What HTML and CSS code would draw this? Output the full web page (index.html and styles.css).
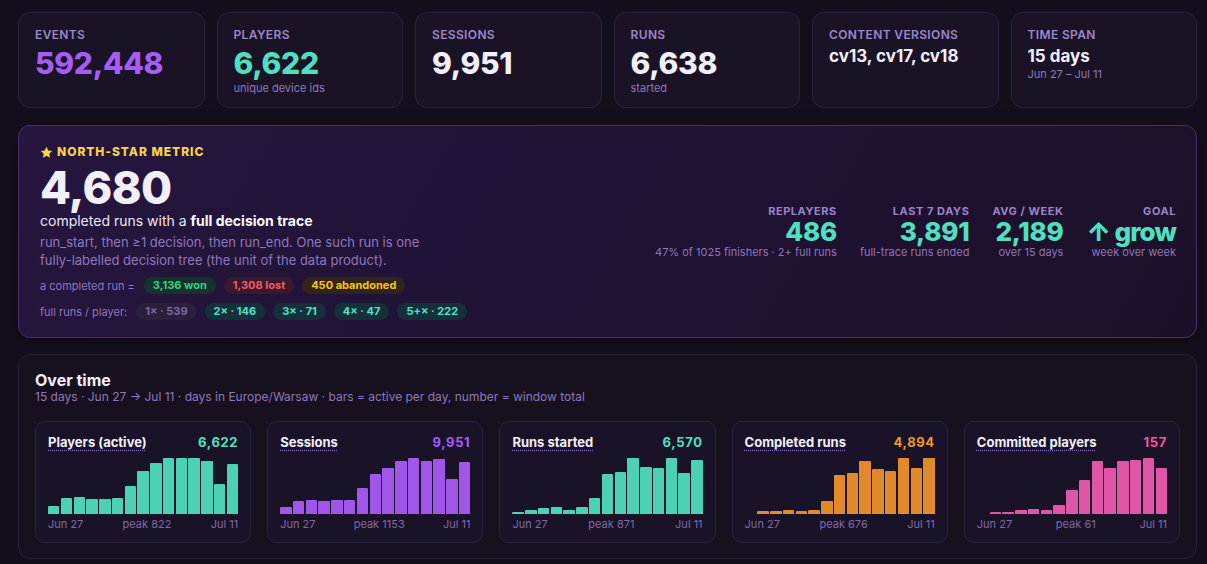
FILE: index.html
```html
<!DOCTYPE html>
<html lang="en">
<head>
    <meta charset="UTF-8">
    <meta name="viewport" content="width=device-width, initial-scale=1.0">
    <title>Telemetry Overview</title>
    <link rel="stylesheet" href="styles.css">
</head>
<body>
<div class="page">

    <!-- Headline counters -->
    <section class="stats">
        <div class="stat">
            <div class="stat-label">Events</div>
            <div class="stat-value purple">592,448</div>
        </div>
        <div class="stat">
            <div class="stat-label">Players</div>
            <div class="stat-value teal">6,622</div>
            <div class="stat-sub">unique device ids</div>
        </div>
        <div class="stat">
            <div class="stat-label">Sessions</div>
            <div class="stat-value">9,951</div>
        </div>
        <div class="stat">
            <div class="stat-label">Runs</div>
            <div class="stat-value">6,638</div>
            <div class="stat-sub">started</div>
        </div>
        <div class="stat">
            <div class="stat-label">Content versions</div>
            <div class="stat-text">cv13, cv17, cv18</div>
        </div>
        <div class="stat">
            <div class="stat-label">Time span</div>
            <div class="stat-text">15 days</div>
            <div class="stat-sub tight">Jun 27 – Jul 11</div>
        </div>
    </section>

    <!-- North-star metric -->
    <section class="northstar">
        <div class="ns-main">
            <div class="ns-label">
                <svg class="ns-star" viewBox="0 0 24 24" width="13" height="13"><path d="M12 1.5l3.2 6.7 7.3.9-5.4 5.1 1.4 7.3L12 17.9l-6.5 3.6 1.4-7.3-5.4-5.1 7.3-.9z" fill="#f7d843"/></svg>
                North-star metric
            </div>
            <div class="ns-value">4,680</div>
            <div class="ns-caption">completed runs with a <strong>full decision trace</strong></div>
            <p class="ns-desc">run_start, then ≥1 decision, then run_end. One such run is one fully-labelled decision tree (the unit of the data product).</p>
            <div class="chip-row">
                <span class="chip-label">a completed run =</span>
                <span class="chip won">3,136 won</span>
                <span class="chip lost">1,308 lost</span>
                <span class="chip abandoned">450 abandoned</span>
            </div>
            <div class="chip-row">
                <span class="chip-label">full runs / player:</span>
                <span class="chip muted">1× · 539</span>
                <span class="chip cyan">2× · 146</span>
                <span class="chip cyan">3× · 71</span>
                <span class="chip cyan">4× · 47</span>
                <span class="chip cyan">5+× · 222</span>
            </div>
        </div>
        <div class="ns-side">
            <div class="kpi">
                <div class="kpi-label">Replayers</div>
                <div class="kpi-value">486</div>
                <div class="kpi-sub">47% of 1025 finishers · 2+ full runs</div>
            </div>
            <div class="kpi">
                <div class="kpi-label">Last 7 days</div>
                <div class="kpi-value">3,891</div>
                <div class="kpi-sub">full-trace runs ended</div>
            </div>
            <div class="kpi">
                <div class="kpi-label">Avg / week</div>
                <div class="kpi-value">2,189</div>
                <div class="kpi-sub">over 15 days</div>
            </div>
            <div class="kpi">
                <div class="kpi-label">Goal</div>
                <div class="kpi-value goal">↑ grow</div>
                <div class="kpi-sub">week over week</div>
            </div>
        </div>
    </section>

    <!-- Daily charts -->
    <section class="panel">
        <h2>Over time</h2>
        <p class="panel-sub">15 days · Jun 27 → Jul 11 · days in Europe/Warsaw · bars = active per day, number = window total</p>
        <div class="charts">
            <div class="chart">
                <div class="chart-head">
                    <span class="chart-title">Players (active)</span>
                    <span class="chart-total teal">6,622</span>
                </div>
                <div class="bars teal-bars" data-values="117,235,250,220,220,235,411,631,749,822,822,822,778,440,734"></div>
                <div class="chart-axis"><span>Jun 27</span><span>peak 822</span><span>Jul 11</span></div>
            </div>
            <div class="chart">
                <div class="chart-head">
                    <span class="chart-title">Sessions</span>
                    <span class="chart-total purple">9,951</span>
                </div>
                <div class="bars purple-bars" data-values="138,265,288,265,288,288,530,819,945,1095,1153,1095,1130,715,1072"></div>
                <div class="chart-axis"><span>Jun 27</span><span>peak 1153</span><span>Jul 11</span></div>
            </div>
            <div class="chart">
                <div class="chart-head">
                    <span class="chart-title">Runs started</span>
                    <span class="chart-total teal">6,570</span>
                </div>
                <div class="bars teal-bars" data-values="35,61,87,105,61,105,244,618,653,871,732,714,871,636,836"></div>
                <div class="chart-axis"><span>Jun 27</span><span>peak 871</span><span>Jul 11</span></div>
            </div>
            <div class="chart">
                <div class="chart-head">
                    <span class="chart-title">Completed runs</span>
                    <span class="chart-total orange">4,894</span>
                </div>
                <div class="bars orange-bars" data-values="0,34,34,47,34,54,155,466,493,642,541,521,676,554,676"></div>
                <div class="chart-axis"><span>Jun 27</span><span>peak 676</span><span>Jul 11</span></div>
            </div>
            <div class="chart">
                <div class="chart-head">
                    <span class="chart-title">Committed players</span>
                    <span class="chart-total pink">157</span>
                </div>
                <div class="bars pink-bars" data-values="0,2,2,4,6,4,10,26,37,58,50,58,59,61,50"></div>
                <div class="chart-axis"><span>Jun 27</span><span>peak 61</span><span>Jul 11</span></div>
            </div>
        </div>
    </section>
</div>

<script>
    // Build the daily bars, scaled to each chart's peak day
    document.querySelectorAll('.bars').forEach((chart) => {
        const values = chart.dataset.values.split(',').map(Number);
        const peak = Math.max(...values);
        values.forEach((v) => {
            const bar = document.createElement('div');
            bar.className = 'bar';
            bar.style.height = (v / peak * 100) + '%';
            chart.appendChild(bar);
        });
    });
</script>
</body>
</html>
```

FILE: styles.css
```css
body {
    margin: 0;
    background: #140f1c;
    color: #f1edf9;
    font-family: Inter, "Liberation Sans", sans-serif;
}
.page {
    padding: 12px 10px 0 18px;
}

/* headline counters */
.stats {
    display: grid;
    grid-template-columns: repeat(6, 1fr);
    gap: 12px;
}
.stat {
    height: 96px;
    box-sizing: border-box;
    padding: 15px 16px 0;
    background: #1a1326;
    border: 1px solid #2b2141;
    border-radius: 12px;
}
.stat-label {
    font-size: 12px;
    line-height: 14px;
    font-weight: 600;
    letter-spacing: 0.03em;
    text-transform: uppercase;
    color: #9d86cd;
}
.stat-value {
    margin-top: 6px;
    font-size: 30px;
    line-height: 30px;
    font-weight: 800;
    letter-spacing: -0.01em;
    color: #f2eefa;
}
.stat-text {
    margin-top: 4px;
    font-size: 17px;
    line-height: 20px;
    font-weight: 700;
    color: #f2eefa;
}
.stat-sub {
    margin-top: 3px;
    font-size: 11px;
    line-height: 14px;
    color: #8d78b9;
}
.stat-sub.tight {
    margin-top: 1px;
}
.purple { color: #a45ef5; }
.teal { color: #4fe0c0; }
.orange { color: #f0982e; }
.pink { color: #f2559f; }

/* north-star metric */
.northstar {
    margin-top: 17px;
    height: 213px;
    box-sizing: border-box;
    display: flex;
    justify-content: space-between;
    align-items: center;
    padding: 0 20px 0 21px;
    background: linear-gradient(120deg, #26163f 0%, #1f1233 55%, #1c1029 100%);
    border: 1px solid #4a2f6a;
    border-radius: 12px;
    box-shadow: 0 4px 18px rgba(0, 0, 0, 0.35);
}
.ns-main {
    align-self: flex-start;
    padding-top: 18px;
}
.ns-label {
    display: flex;
    align-items: center;
    gap: 4px;
    font-size: 12px;
    line-height: 16px;
    font-weight: 800;
    letter-spacing: 0.08em;
    text-transform: uppercase;
    color: #f7d843;
}
.ns-value {
    margin-top: 5px;
    font-size: 45px;
    line-height: 46px;
    font-weight: 800;
    letter-spacing: -0.015em;
    color: #f2eefa;
}
.ns-caption {
    font-size: 14px;
    line-height: 20px;
    color: #ece6f7;
}
.ns-caption strong {
    font-weight: 700;
    color: #fbf9ff;
}
.ns-desc {
    margin: 2px 0 0;
    max-width: 410px;
    font-size: 13px;
    line-height: 18px;
    color: #8e77bb;
}
.chip-row {
    display: flex;
    align-items: center;
    gap: 8px;
    margin-top: 8px;
}
.chip-row + .chip-row {
    margin-top: 9px;
}
.chip-label {
    margin-right: 1px;
    font-size: 11px;
    color: #8e77bb;
}
.chip {
    height: 17px;
    line-height: 17px;
    padding: 0 9px;
    border-radius: 9px;
    font-size: 11px;
    font-weight: 700;
}
.chip.won { background: #15322f; color: #30d27e; }
.chip.lost { background: #3a1830; color: #f15d5f; }
.chip.abandoned { background: #33231d; color: #f6c518; }
.chip.muted { background: #2a1f3d; color: #7b699e; }
.chip.cyan { background: #16303b; color: #4fe2c6; }

.ns-side {
    display: flex;
    gap: 23px;
    text-align: right;
}
.kpi-label {
    font-size: 11px;
    line-height: 14px;
    font-weight: 700;
    letter-spacing: 0.05em;
    text-transform: uppercase;
    color: #9b84cb;
}
.kpi-value {
    font-size: 26px;
    line-height: 27px;
    font-weight: 800;
    letter-spacing: -0.01em;
    color: #4fe0c0;
}
.kpi-value.goal {
    letter-spacing: -0.035em;
}
.kpi-sub {
    font-size: 11px;
    line-height: 14px;
    color: #8e77bb;
}

/* daily charts */
.panel {
    margin-top: 16px;
    padding: 16px 16px 15px;
    background: #17111f;
    border: 1px solid #281e38;
    border-radius: 12px;
}
.panel h2 {
    margin: 0;
    font-size: 16px;
    line-height: 18px;
    font-weight: 700;
    color: #f2eefa;
}
.panel-sub {
    margin: 0;
    font-size: 12px;
    line-height: 16px;
    color: #8e77bb;
}
.charts {
    display: grid;
    grid-template-columns: repeat(5, 1fr);
    gap: 16px;
    margin-top: 16px;
}
.chart {
    padding: 12px 12px 11px;
    background: #1a1327;
    border: 1px solid #2b2143;
    border-radius: 10px;
}
.chart-head {
    display: flex;
    justify-content: space-between;
    align-items: baseline;
    font-size: 13px;
    line-height: 16px;
    font-weight: 700;
}
.chart-title {
    color: #f2eefa;
    text-decoration: underline dotted #7d62c6;
    text-underline-offset: 3px;
}
.chart-total {
    letter-spacing: 0.05em;
}
.bars {
    display: flex;
    align-items: flex-end;
    gap: 1.3px;
    height: 56px;
    margin-top: 8px;
}
.bar {
    flex: 1;
    border-radius: 1px 1px 0 0;
}
.teal-bars .bar { background: #4dd1b4; }
.purple-bars .bar { background: #a056e8; }
.orange-bars .bar { background: #e28a2b; }
.pink-bars .bar { background: #df56a6; }
.chart-axis {
    display: flex;
    justify-content: space-between;
    margin-top: 3px;
    font-size: 11px;
    line-height: 14px;
    color: #7f6aa6;
}
```
